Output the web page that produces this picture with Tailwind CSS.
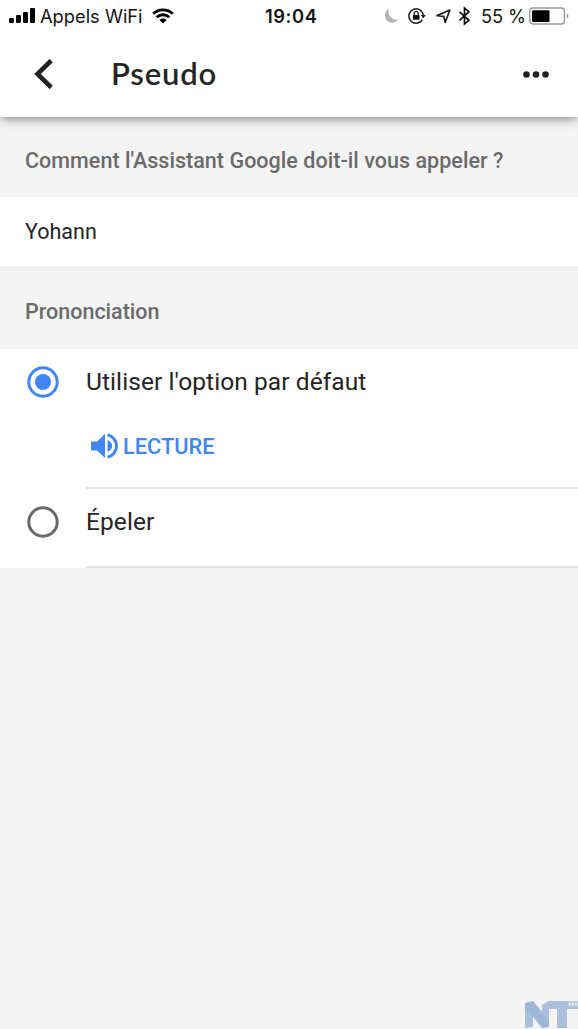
<!DOCTYPE html>
<html lang="fr">
<head>
<meta charset="utf-8">
<title>Pseudo</title>
<script src="https://cdn.jsdelivr.net/npm/@tailwindcss/browser@4"></script>
</head>
<body class="bg-[#f4f4f4] font-['Roboto',sans-serif] text-[#252525]">
<div class="flex h-[1029px] w-[578px] flex-col overflow-hidden">
  <header class="z-10 h-[117px] shrink-0 bg-white shadow-[0_3px_10px_-1px_rgba(0,0,0,0.45)]">
    <div class="flex h-8 items-center whitespace-nowrap pl-[9px] font-['Inter',sans-serif] text-[18.3px] leading-8 text-[#151515]">
      <svg class="h-4 w-[27px] shrink-0" viewBox="0 0 27 16" fill="#000"><rect x="0" y="10" width="5" height="5" rx="1.2"/><rect x="7" y="7" width="5" height="8" rx="1.2"/><rect x="14" y="4" width="5" height="11" rx="1.2"/><rect x="21" y="0" width="5" height="15" rx="1.2"/></svg>
      <span class="ml-1 w-[112px] shrink-0">Appels WiFi</span>
      <svg class="h-4 w-[22px] shrink-0" viewBox="0 0 22 16" fill="none" stroke="#000" stroke-width="2.8"><path d="M1.2 5.8a14 14 0 0 1 19.6 0M4.7 9.3a9 9 0 0 1 12.6 0"/><path d="M11 15.5 7.4 11.9a5.2 5.2 0 0 1 7.2 0z" fill="#000" stroke="none"/></svg>
      <span class="ml-[91px] w-[119px] shrink-0 font-semibold tracking-[0.6px]">19:04</span>
      <svg class="h-4 w-[15px] shrink-0" viewBox="0 0 15 16" fill="#b4b4b4"><path d="M5 .8A7.300 7.300 0 1 0 14.200 11.500 8 8 0 0 1 5 .8z"/></svg>
      <svg class="ml-[9px] h-[18px] w-[18px] shrink-0" viewBox="0 0 18 18" fill="none" stroke="#222" stroke-width="1.500"><path d="M14.300 12.700A7.200 7.200 0 1 1 15.200 8"/><path d="M12.800 8h5l-2.500 3.500z" fill="#222" stroke="none"/><rect x="4.900" y="8" width="6.600" height="4.800" rx=".5" fill="#111" stroke="none"/><path d="M6.300 8V6.200a1.900 1.900 0 0 1 3.800 0V8" stroke-width="1.300"/></svg>
      <svg class="ml-[10px] h-4 w-[15px] shrink-0" viewBox="0 0 15 16" fill="none" stroke="#222" stroke-width="1.700" stroke-linejoin="round"><path d="M13.800 2 1 7.600l6.800.7 1.400 6.200z"/></svg>
      <svg class="ml-[7px] h-5 w-[13px] shrink-0" viewBox="0 0 12 20" fill="none" stroke="#111" stroke-width="1.700"><path d="m1 5.800 9.500 8.500L6 18V2l4.500 3.700L1 14.300"/></svg>
      <span class="ml-[10px] w-[48px] shrink-0 tracking-[-0.1px]">55 %</span>
      <svg class="h-[18px] w-[41px] shrink-0" viewBox="0 0 41 18"><rect x=".8" y="1" width="34.700" height="16" rx="3" fill="#fff" stroke="#999" stroke-width="1.400"/><rect x="3" y="3.200" width="17.500" height="11.800" rx="1" fill="#000"/><path d="M37.800 6q3.200 3 0 6z" fill="#999"/></svg>
    </div>
    <div class="flex h-[85px] items-center pl-[34px] pr-[29px]">
      <svg class="mt-[-1px] h-[30px] w-[20px]" viewBox="0 0 20 30" fill="none" stroke="#222" stroke-width="4.600"><path d="M17.200 1.500 3.500 15l13.700 13.500"/></svg>
      <h1 class="ml-[57px] mt-[-4px] whitespace-nowrap font-['Lato',sans-serif] text-[31px] font-semibold leading-[40px] tracking-[0.8px]">Pseudo</h1>
      <svg class="ml-auto mt-[-1px] h-[7px] w-[26px]" viewBox="0 0 26 7" fill="#222"><circle cx="3.500" cy="3.500" r="3.300"/><circle cx="13" cy="3.500" r="3.300"/><circle cx="22.500" cy="3.500" r="3.300"/></svg>
    </div>
  </header>
  <main class="flex flex-1 flex-col whitespace-nowrap">
    <h2 class="flex h-20 items-center pl-[25px] pt-[8px] text-[21.500px] font-medium tracking-[0.04px] text-[#6b6b6b]">Comment l'Assistant Google doit-il vous appeler ?</h2>
    <div class="flex h-[71px] items-center border-b border-[#e6e6e6] bg-white pl-[25px] text-[21.500px]">Yohann</div>
    <h2 class="flex h-[81px] items-center pl-[25px] pt-[7px] text-[21.500px] font-medium text-[#6b6b6b]">Prononciation</h2>
    <section class="bg-white text-[24.500px] tracking-[0.08px]">
      <div class="flex h-[66px] items-center pl-[27px]">
        <svg class="h-8 w-8" viewBox="0 0 32 32" fill="none"><circle cx="16" cy="16" r="14.200" stroke="#4285f4" stroke-width="3"/><circle cx="16" cy="16" r="8" fill="#4285f4"/></svg>
        <span class="ml-[27px]">Utiliser l'option par défaut</span>
      </div>
      <div class="ml-[86px] flex h-[74px] items-center border-b-2 border-[#e6e6e6] pb-[11px] pl-1 text-[21.800px] font-medium tracking-normal text-[#4285f4]">
        <svg class="h-[28px] w-[30px]" viewBox="0 0 30 28" fill="#4285f4"><path d="M1 9.500h6L15 2v24l-8-7.500H1zM17.500 8q4.700 2.300 4.700 6t-4.700 6z"/><path d="M17.500 2.700a11.600 11.600 0 0 1 0 22.600" fill="none" stroke="#4285f4" stroke-width="3"/></svg>
        <span class="ml-[3px] pt-[3px]">LECTURE</span>
      </div>
      <div class="flex h-[79px] items-center">
        <svg class="mb-[13px] ml-[27px] h-8 w-8" viewBox="0 0 32 32" fill="none"><circle cx="16" cy="16" r="14.200" stroke="#696969" stroke-width="3"/></svg>
        <span class="ml-[27px] flex h-full flex-1 items-center border-b-2 border-[#e2e2e2] pb-[11px]">Épeler</span>
      </div>
    </section>
    <footer class="mt-auto flex justify-end">
      <svg class="h-[29px] w-[53px]" viewBox="0 0 53 29" role="img" aria-label="NT"><path d="M0 3 8 1l9 11V5l7-4h29v8H42v19H32V9h-8v18l-7 1L8 16v11l-8 1z" fill="#abc0dd"/><path d="M0 3 8 1l16 20v6l-7 1L0 8z" fill="#91acd0" opacity=".4"/><path d="M43 1h10v6H43z" fill="#bccce2"/><path d="M44 3h2v2h-2zm3 0h2v2h-2zm3 0h2v2h-2z" fill="#e9eff7"/></svg>
    </footer>
  </main>
</div>
</body>
</html>
